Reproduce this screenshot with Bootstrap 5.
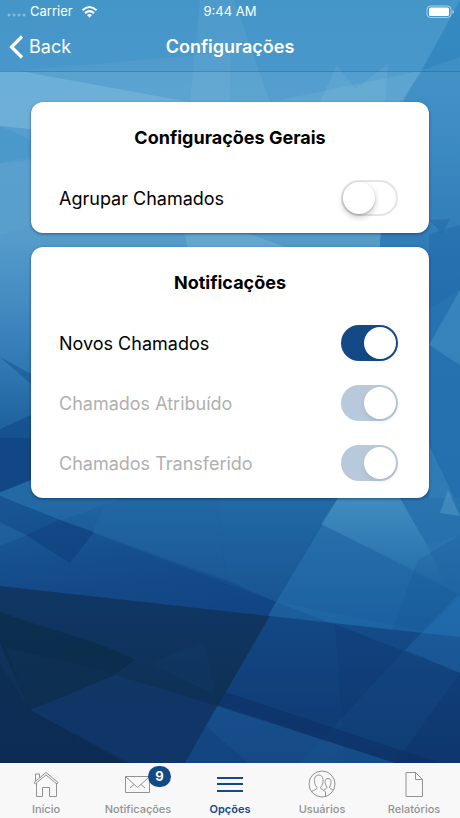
<!DOCTYPE html>
<html lang="pt-BR">
<head>
<meta charset="utf-8">
<meta name="viewport" content="width=device-width, initial-scale=1">
<title>Configurações</title>
<link rel="stylesheet" href="https://cdn.jsdelivr.net/npm/bootstrap@5.3.0/dist/css/bootstrap.min.css">
<style>
  :root { --brand: #134a86; }
  body { font-family: Inter, "Liberation Sans", sans-serif; background: #0e3060; color: #000; }
  .backdrop { position: absolute; inset: 0; z-index: -1; width: 100%; height: 100%; }
  .app-shell { isolation: isolate; }
  .status-row { display: grid; grid-template-columns: 1fr auto 1fr; height: 23px; padding: 0 6px; font-size: 13px; line-height: 23px; }
  .title-row { display: grid; grid-template-columns: 1fr auto 1fr; height: 48px; padding: 0 9px; }
  .top-bar { border-bottom: 1px solid rgba(20, 80, 130, .3); background: rgba(40, 130, 190, .18); }
  .back-link { font-size: 18px; line-height: 24px; gap: 5px; }
  .page-title { font-size: 18px; line-height: 24px; }
  .settings-list { padding: 30px 31px; gap: 14px; }
  .panel { border-radius: 12px; padding: 24px 28px 5px; box-shadow: 0 1px 3px rgba(0, 30, 70, .5); }
  .panel-title { font-size: 18px; line-height: 24px; margin-bottom: 18px; }
  .setting-row { height: 60px; font-size: 18px; }
  .setting-row.is-disabled label { color: #b0b0b0; }
  .toggle.form-check-input { flex: none; width: 57px; height: 36px; margin: 0 3px 0 0; padding: 2px; border: 0; border-radius: 18px; background: #fff; box-shadow: inset 0 0 0 2px #e5e5e5; }
  .toggle.form-check-input::before { content: ""; display: block; width: 32px; height: 32px; border-radius: 50%; background: #fff; box-shadow: 0 3px 6px rgba(0, 0, 0, .22), 0 1px 2px rgba(0, 0, 0, .15); }
  .toggle.form-check-input:checked { background: var(--brand); box-shadow: none; }
  .toggle.form-check-input:checked::before { margin-left: 21px; box-shadow: 0 3px 5px rgba(0, 0, 0, .08); }
  .toggle.form-check-input:disabled { background: #b8c9db; opacity: 1; }
  .tab-bar { background: #f8f8f8; height: 55px; }
  .tab-link { color: #929292; font-size: 11px; line-height: 14px; font-weight: 500; padding-top: 5px; }
  .tab-link.active { color: var(--brand); font-weight: 600; }
  .tab-link svg { display: block; margin-bottom: 2px; }
  .count { top: -2px; left: 25px; width: 23px; height: 21px; border-radius: 11px; background: var(--brand); font-size: 13px; line-height: 21px; }
</style>
<script defer src="https://cdn.jsdelivr.net/npm/bootstrap@5.3.0/dist/js/bootstrap.bundle.min.js"></script>
</head>
<body>
<div class="app-shell position-relative d-flex flex-column min-vh-100">
  <svg class="backdrop" viewBox="0 0 460 818" preserveAspectRatio="none" aria-hidden="true">
    <defs>
      <linearGradient id="sky" x1="0" y1="0" x2="0" y2="1">
        <stop offset="0" stop-color="#4b9bcb"/><stop offset=".14" stop-color="#559fcf"/>
        <stop offset=".29" stop-color="#559ccb"/><stop offset=".38" stop-color="#4189bf"/>
        <stop offset=".45" stop-color="#2f78b3"/><stop offset=".52" stop-color="#1f639f"/>
        <stop offset=".62" stop-color="#1f63a1"/><stop offset=".72" stop-color="#164d8b"/>
        <stop offset=".95" stop-color="#0d3062"/>
      </linearGradient>
      <linearGradient id="east" x1="0" y1="0" x2="0" y2="1">
        <stop offset="0" stop-color="#4b9bcb"/><stop offset=".3" stop-color="#3b89c1"/>
        <stop offset=".6" stop-color="#2773b1"/><stop offset="1" stop-color="#236eac"/>
      </linearGradient>
      <linearGradient id="slope" x1="0" y1="0" x2="0" y2="1">
        <stop offset="0" stop-color="#2f7cb6"/><stop offset=".4" stop-color="#1d64a3"/>
        <stop offset="1" stop-color="#12417e"/>
      </linearGradient>
      <linearGradient id="deep" x1="0" y1="0" x2="0" y2="1">
        <stop offset="0" stop-color="#103765"/><stop offset=".45" stop-color="#0e3157"/>
        <stop offset="1" stop-color="#0e2f60"/>
      </linearGradient>
      <linearGradient id="floor" x1="0" y1="0" x2="0" y2="1">
        <stop offset="0" stop-color="#154d8b"/><stop offset=".7" stop-color="#103a72"/><stop offset="1" stop-color="#103569"/>
      </linearGradient>
      <linearGradient id="shade" x1="0" y1="0" x2="1" y2="0">
        <stop offset="0" stop-color="#0f4080" stop-opacity=".2"/><stop offset="1" stop-color="#0f4080" stop-opacity=".55"/>
      </linearGradient>
      <linearGradient id="ray" x1="0" y1="0" x2="0" y2="1">
        <stop offset="0" stop-color="#6bb1d5" stop-opacity=".3"/><stop offset="1" stop-color="#6bb1d5" stop-opacity="0"/>
      </linearGradient>
    </defs>
    <rect width="460" height="818" fill="url(#sky)"/>
    <path d="M460 0V510H380V240L403 102Z" fill="url(#east)"/>
    <path d="M200 0H234L270 102H190Z" fill="#7ebbdc" opacity=".22"/>
    <path d="M460 0V57L422 71Z" fill="#287fba" opacity=".5"/>
    <path d="M0 71H20L190 102V130H40L0 126Z" fill="#7bb9db" opacity=".65"/>
    <path d="M20 71L230 52V102H190Z" fill="#7bb9db" opacity=".2"/>
    <path d="M460 56L420 71 280 100 260 102H400L422 71Z" fill="#79b6d9" opacity=".28"/>
    <path d="M320 102L337 65 355 89 388 64 385 102Z" fill="#8bc2df" opacity=".2"/>
    <path d="M0 126L31 140V160L0 163Z" fill="#4594c8" opacity=".6"/>
    <path d="M0 163L31 156V226L0 235Z" fill="#71add3" opacity=".16"/>
    <path d="M185 234H250L285 247H187Z" fill="#82bcdd" opacity=".35"/>
    <path d="M430 220L450 219 442 234Z" fill="#1c619f" opacity=".4"/>
    <path d="M429 234L460 225V290L429 309Z" fill="#1f68a7" opacity=".5"/>
    <path d="M460 290L429 345 460 365Z" fill="#4b98cb" opacity=".45"/>
    <path d="M429 445L460 510H429Z" fill="#57a0ce" opacity=".25"/>
    <path d="M0 357L31 374V384Z" fill="#0d4381" opacity=".35"/>
    <path d="M0 429L31 415V480L0 492Z" fill="#0c3d7c" opacity=".45"/>
    <path d="M0 438H31V480L0 492Z" fill="#0c3875" opacity=".4"/>
    <path d="M0 493L31 480 120 498 80 514 60 520 0 496Z" fill="#2b78ae" opacity=".3"/>
    <path d="M0 496L60 520 26 535 0 524Z" fill="#0f4080" opacity=".25"/>
    <path d="M0 522L27 535 0 546Z" fill="#317cb5" opacity=".35"/>
    <path d="M60 520L94 532 70 563 26 535Z" fill="#0c3873" opacity=".5"/>
    <path d="M107 500H218L226 580 92 532Z" fill="#2872ae" opacity=".25"/>
    <path d="M218 498H338L276 602 226 580Z" fill="#2b79b5" opacity=".22"/>
    <path d="M0 496L60 520 276 602 270 616 0 586Z" fill="url(#shade)"/>
    <path d="M338 498H460V818H153L276 602Z" fill="url(#slope)"/>
    <path d="M338 498H400L427 545 445 585 321 524Z" fill="url(#ray)"/>
    <path d="M321 524L460 595V638L276 602Z" fill="#175797" opacity=".22"/>
    <path d="M427 545L460 535V498H400Z" fill="#246ea9" opacity=".5"/>
    <path d="M440 513L448 490 460 516Z" fill="#6ab0d5" opacity=".35"/>
    <path d="M418 560L460 535V598L404 650 388 642Z" fill="#0c478a" opacity=".14"/>
    <path d="M270 616L460 637V818H153Z" fill="url(#floor)"/>
    <path d="M276 602L460 673V818H320L340 740 217 705 225 690Z" fill="#0d326b" opacity=".16"/>
    <path d="M335 624L460 673V763H345Z" fill="#0d326b" opacity=".22"/>
    <path d="M460 593L405 650 460 673Z" fill="#2c7cc0" opacity=".3"/>
    <path d="M405 650L300 763H395L460 673Z" fill="#2c72b2" opacity=".1"/>
    <path d="M0 586L270 616 185 763 153 818H0Z" fill="url(#deep)"/>
    <path d="M0 612C45 629 95 639 135 660L115 674 30 710 0 643Z" fill="#0b2941" opacity=".55"/>
    <path d="M5 647L115 674 30 710Z" fill="#10345e" opacity=".35"/>
    <path d="M150 663L204 641 215 695Z" fill="#15406c" opacity=".3"/>
    <path d="M30 710L115 675 165 690 218 706 185 763H130Z" fill="#12396e" opacity=".65"/>
    <path d="M0 664L30 710 125 763H0Z" fill="#0b2951" opacity=".4"/>
    <path d="M225 692L400 750 440 763H395L217 705Z" fill="#0c2e61" opacity=".5"/>
    <path d="M217 706L395 763H185Z" fill="#1d63a5" opacity=".4"/>
    <path d="M206 726L248 763H185Z" fill="#0e3d79" opacity=".4"/>
  </svg>

  <header class="top-bar text-white">
    <div class="status-row">
      <div class="d-flex align-items-center">
        <svg class="me-1" width="20" height="23" fill="#fff" opacity=".35" aria-hidden="true"><circle cx="3" cy="15" r="1.500"/><circle cx="8" cy="15" r="1.500"/><circle cx="13" cy="15" r="1.500"/><circle cx="18" cy="15" r="1.500"/></svg>
        <span>Carrier</span>
        <svg class="ms-2" width="17" height="14" viewBox="0 0 18 14" aria-label="Wi-Fi" role="img"><g fill="none" stroke="#fff" stroke-width="2.200"><path d="M1.500 5.200Q9-1.800 16.500 5.200"/><path d="M4.300 8.200Q9 4 13.700 8.200"/></g><path d="M6.300 10.300Q9 8 11.700 10.300L9 13Z" fill="#fff"/></svg>
      </div>
      <span>9:44 AM</span>
      <div class="d-flex align-items-center justify-content-end">
        <svg width="28" height="14" viewBox="0 0 28 14" aria-label="Bateria" role="img"><rect x="1" y="1" width="24" height="11.500" rx="3.500" fill="none" stroke="#fff" stroke-opacity=".55"/><rect x="3" y="2.500" width="20" height="8.500" rx="1.500" fill="#fff"/><path d="M26.300 5V9Q28 8 28 7T26.300 5Z" fill="#fff" opacity=".55"/></svg>
      </div>
    </div>
    <div class="title-row align-items-center">
      <a href="#" class="back-link d-inline-flex align-items-center text-white text-decoration-none">
        <svg width="15" height="24" viewBox="0 0 15 24" fill="none" stroke="#fff" stroke-width="3.200" aria-hidden="true"><path d="M13 1.500L2.500 12 13 22.500"/></svg>
        Back
      </a>
      <h1 class="page-title fw-semibold m-0">Configurações</h1>
    </div>
  </header>

  <main class="settings-list flex-grow-1 d-flex flex-column">
    <section class="panel bg-white">
      <h2 class="panel-title fw-bold text-center">Configurações Gerais</h2>
      <div class="setting-row d-flex align-items-center justify-content-between">
        <label for="group">Agrupar Chamados</label>
        <input class="toggle form-check-input" type="checkbox" role="switch" id="group">
      </div>
    </section>
    <section class="panel bg-white">
      <h2 class="panel-title fw-bold text-center">Notificações</h2>
      <div class="setting-row d-flex align-items-center justify-content-between">
        <label for="new">Novos Chamados</label>
        <input class="toggle form-check-input" type="checkbox" role="switch" id="new" checked>
      </div>
      <div class="setting-row is-disabled d-flex align-items-center justify-content-between">
        <label for="assigned">Chamados Atribuído</label>
        <input class="toggle form-check-input" type="checkbox" role="switch" id="assigned" checked disabled>
      </div>
      <div class="setting-row is-disabled d-flex align-items-center justify-content-between">
        <label for="transferred">Chamados Transferido</label>
        <input class="toggle form-check-input" type="checkbox" role="switch" id="transferred" checked disabled>
      </div>
    </section>
  </main>

  <nav class="tab-bar row g-0" aria-label="Principal">
    <a href="#" class="tab-link col d-flex flex-column align-items-center text-decoration-none">
      <svg width="30" height="32" viewBox="0 0 30 32" fill="none" stroke="currentColor" aria-hidden="true"><path d="M3 14.500L15 4.500 27 14.500 25.800 16 15 7 4.200 16ZM5.500 15V28.500H11.500V19.500H18.500V28.500H25.500V15M4.500 13V6H8.500V9.800"/></svg>
      Início
    </a>
    <a href="#" class="tab-link col d-flex flex-column align-items-center text-decoration-none">
      <span class="position-relative">
        <svg width="30" height="32" viewBox="0 0 30 32" fill="none" stroke="currentColor" aria-hidden="true"><path d="M2.500 8.500H26.500V24.500H2.500ZM2.500 8.500L14.500 19.500 26.500 8.500M7 20L11 16.500M22 20L18 16.500"/></svg>
        <span class="count position-absolute text-white text-center fw-bold">9</span>
      </span>
      Notificações
    </a>
    <a href="#" class="tab-link active col d-flex flex-column align-items-center text-decoration-none" aria-current="page">
      <svg width="30" height="32" viewBox="0 0 30 32" fill="none" stroke="currentColor" stroke-width="2" aria-hidden="true"><path d="M2 10H28M2 16H28M2 23H28"/></svg>
      Opções
    </a>
    <a href="#" class="tab-link col d-flex flex-column align-items-center text-decoration-none">
      <svg width="30" height="32" viewBox="0 0 30 32" fill="none" stroke="currentColor" aria-hidden="true"><circle cx="15" cy="16" r="13"/><path d="M4.500 23.500C7 21.800 10 22 10 19.500C7.500 17 7.500 14 7.500 11.500C7.500 5.500 16 5.500 16 11.500C16 14 16 17 13.500 19.500C13.500 22 18 22 18.500 24V28.500M17 21.500C19 20.800 20 20.500 20 19C17 15 17.500 10.500 21 10.500S25 15 22.500 19C22.500 20.500 24 20.800 26 22"/></svg>
      Usuários
    </a>
    <a href="#" class="tab-link col d-flex flex-column align-items-center text-decoration-none">
      <svg width="30" height="32" viewBox="0 0 30 32" fill="none" stroke="currentColor" aria-hidden="true"><path d="M7 4.500H16.500L23.500 11.500V28.500H7ZM16.500 4.500V11.500H23.500"/></svg>
      Relatórios
    </a>
  </nav>
</div>
</body>
</html>
